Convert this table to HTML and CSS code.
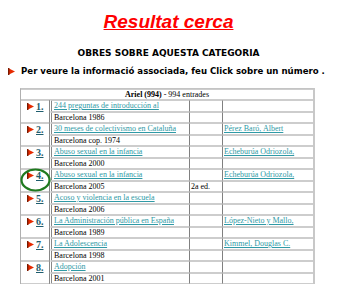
FILE: index.html
```html
<!DOCTYPE html>
<html lang="ca">
<head>
<meta charset="utf-8">
<title>Resultat cerca</title>
<link rel="stylesheet" href="styles.css">
</head>
<body>
<h1 class="title">Resultat cerca</h1>
<h2 class="subtitle">OBRES SOBRE AQUESTA CATEGORIA</h2>
<p class="hint"><svg class="arrow" width="7" height="7" viewBox="0 0 7 7"><polygon points="0,0 7,3.5 0,7" fill="#e62a00"/><rect x="0" y="0" width="1.4" height="7" fill="#7a1a00"/></svg>Per veure la informació associada, feu Click sobre un número .</p>
<table class="results">
<colgroup><col class="c-num"><col class="c-title"><col class="c-ed"><col class="c-author"></colgroup>
<tr class="head"><td colspan="4"><b>Ariel (994)</b> - 994 entrades</td></tr>

<tr class="t-row"><td class="num" rowspan="2"><svg class="arrow" width="7" height="7" viewBox="0 0 7 7"><polygon points="0,0 7,3.5 0,7" fill="#e62a00"/><rect x="0" y="0" width="1.4" height="7" fill="#7a1a00"/></svg><a href="#">1.</a></td><td class="ttl"><a href="#">244 preguntas de introducción al</a></td><td></td><td class="aut"></td></tr>
<tr class="c-row"><td class="ttl">Barcelona 1986</td><td></td><td class="aut"></td></tr>

<tr class="t-row"><td class="num" rowspan="2"><svg class="arrow" width="7" height="7" viewBox="0 0 7 7"><polygon points="0,0 7,3.5 0,7" fill="#e62a00"/><rect x="0" y="0" width="1.4" height="7" fill="#7a1a00"/></svg><a href="#">2.</a></td><td class="ttl"><a href="#">30 meses de colectivismo en Cataluña</a></td><td></td><td class="aut"><a href="#">Pérez Baró, Albert</a></td></tr>
<tr class="c-row"><td class="ttl">Barcelona cop. 1974</td><td></td><td class="aut"></td></tr>

<tr class="t-row"><td class="num" rowspan="2"><svg class="arrow" width="7" height="7" viewBox="0 0 7 7"><polygon points="0,0 7,3.5 0,7" fill="#e62a00"/><rect x="0" y="0" width="1.4" height="7" fill="#7a1a00"/></svg><a href="#">3.</a></td><td class="ttl"><a href="#">Abuso sexual en la infancia</a></td><td></td><td class="aut"><a href="#">Echeburúa Odriozola,</a></td></tr>
<tr class="c-row"><td class="ttl">Barcelona 2000</td><td></td><td class="aut"></td></tr>

<tr class="t-row"><td class="num marked" rowspan="2"><svg class="arrow" width="7" height="7" viewBox="0 0 7 7"><polygon points="0,0 7,3.5 0,7" fill="#e62a00"/><rect x="0" y="0" width="1.4" height="7" fill="#7a1a00"/></svg><a href="#">4.</a><svg class="ring" width="31" height="24" viewBox="0 0 31 24"><ellipse cx="15.5" cy="12" rx="14" ry="10.5" fill="none" stroke="#1f7a1f" stroke-width="2.2"/></svg></td><td class="ttl"><a href="#">Abuso sexual en la infancia</a></td><td></td><td class="aut"><a href="#">Echeburúa Odriozola,</a></td></tr>
<tr class="c-row"><td class="ttl">Barcelona 2005</td><td>2a ed.</td><td class="aut"></td></tr>

<tr class="t-row"><td class="num" rowspan="2"><svg class="arrow" width="7" height="7" viewBox="0 0 7 7"><polygon points="0,0 7,3.5 0,7" fill="#e62a00"/><rect x="0" y="0" width="1.4" height="7" fill="#7a1a00"/></svg><a href="#">5.</a></td><td class="ttl"><a href="#">Acoso y violencia en la escuela</a></td><td></td><td class="aut"></td></tr>
<tr class="c-row"><td class="ttl">Barcelona 2006</td><td></td><td class="aut"></td></tr>

<tr class="t-row"><td class="num" rowspan="2"><svg class="arrow" width="7" height="7" viewBox="0 0 7 7"><polygon points="0,0 7,3.5 0,7" fill="#e62a00"/><rect x="0" y="0" width="1.4" height="7" fill="#7a1a00"/></svg><a href="#">6.</a></td><td class="ttl"><a href="#">La Administración pública en España</a></td><td></td><td class="aut"><a href="#">López-Nieto y Mallo,</a></td></tr>
<tr class="c-row"><td class="ttl">Barcelona 1989</td><td></td><td class="aut"></td></tr>

<tr class="t-row"><td class="num" rowspan="2"><svg class="arrow" width="7" height="7" viewBox="0 0 7 7"><polygon points="0,0 7,3.5 0,7" fill="#e62a00"/><rect x="0" y="0" width="1.4" height="7" fill="#7a1a00"/></svg><a href="#">7.</a></td><td class="ttl"><a href="#">La Adolescencia</a></td><td></td><td class="aut"><a href="#">Kimmel, Douglas C.</a></td></tr>
<tr class="c-row"><td class="ttl">Barcelona 1998</td><td></td><td class="aut"></td></tr>

<tr class="t-row"><td class="num" rowspan="2"><svg class="arrow" width="7" height="7" viewBox="0 0 7 7"><polygon points="0,0 7,3.5 0,7" fill="#e62a00"/><rect x="0" y="0" width="1.4" height="7" fill="#7a1a00"/></svg><a href="#">8.</a></td><td class="ttl"><a href="#">Adopción</a></td><td></td><td class="aut"></td></tr>
<tr class="c-row"><td class="ttl">Barcelona 2001</td><td></td><td class="aut"></td></tr>
</table>
</body>
</html>
```
FILE: styles.css
```css
html, body {
  background: #ffffff;
}
body {
  margin: 8px;
  font-family: "DejaVu Sans", Verdana, sans-serif;
  color: #000;
}
.title {
  margin: 3px 0 0 0;
  font-family: "Liberation Sans", Arial, sans-serif;
  font-size: 19px;
  line-height: 22px;
  font-weight: bold;
  font-style: italic;
  color: #ff0000;
  text-decoration: underline;
  text-align: center;
}
.subtitle {
  margin: 15px 0 0 0;
  font-size: 9px;
  line-height: 11px;
  font-weight: bold;
  text-align: center;
}
.hint {
  margin: 7px 0 0 0;
  font-size: 8.6px;
  line-height: 11px;
  font-weight: bold;
  white-space: nowrap;
}
.hint .arrow {
  margin-right: 6px;
  vertical-align: -1px;
}
.results {
  margin: 11px 0 0 12px;
  width: 292px;
  table-layout: fixed;
  border-collapse: separate;
  border-spacing: 0;
  border-top: 1px solid #c4c4c4;
  border-left: 1px solid #b0b0b0;
  border-right: 2px solid #c8c8c8;
  font-family: "Liberation Serif", "Times New Roman", serif;
  font-size: 8px;
}
.c-num { width: 28px; }
.c-title { width: 140px; }
.c-ed { width: 33px; }
.c-author { width: 91px; }
.results td {
  padding: 0 1px;
  border-top: 1px solid #cdcdcd;
  border-bottom: 1px solid #cdcdcd;
  border-left: 1px solid #808080;
  white-space: nowrap;
  overflow: hidden;
  vertical-align: middle;
}
.results .head td {
  border-left: none;
  text-align: center;
  line-height: 9px;
  height: 9px;
}
.t-row td {
  line-height: 10px;
  height: 10px;
}
.c-row td {
  line-height: 9px;
  height: 9px;
}
.results td.num {
  border-left: none;
  padding: 1px 0 0 6px;
  vertical-align: top;
  position: relative;
  overflow: visible;
}
.results td.ttl {
  border-left: 3px double #888888;
  padding-left: 2px;
}
.num .arrow {
  margin-right: 2px;
  vertical-align: 0;
}
.num a {
  font-size: 10px;
  font-weight: bold;
  color: #1e5d6e;
  text-decoration: underline;
}
.ttl a, .aut a {
  color: #2f9aa6;
  text-decoration: underline;
}
.ring {
  position: absolute;
  left: -1px;
  top: -2px;
}
```
